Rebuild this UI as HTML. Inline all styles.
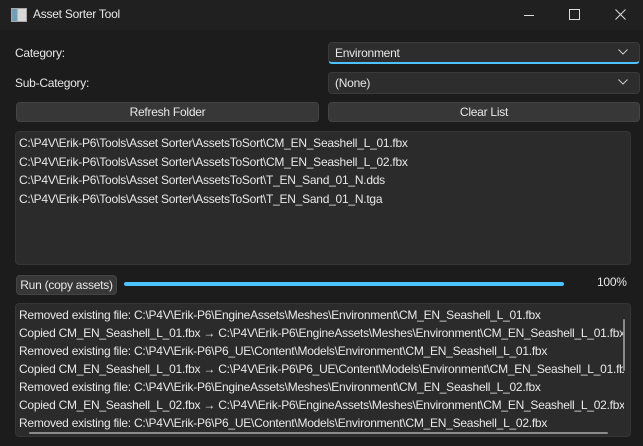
<!DOCTYPE html>
<html><head><style>
body{margin:0;width:643px;height:446px;background:#1c1c1c;font-family:"Liberation Sans",sans-serif;font-size:12px;color:#e8e8e8;position:relative;overflow:hidden;letter-spacing:-0.25px}
.a{position:absolute;white-space:nowrap}
.box{position:absolute;background:#2b2b2b;border:1px solid #353535;border-radius:4px}
.combo{position:absolute;background:#2d2d2d;border:1px solid #3a3a3a;border-radius:4px;height:20px}
.btn{position:absolute;background:#373737;border:1px solid #444;border-radius:4px;text-align:center;line-height:18px}
</style></head><body>
<div class="a" style="left:0;top:0;width:643px;height:30px;background:#202020"></div>
<div class="a" style="left:11px;top:8px;width:14px;height:12px;background:linear-gradient(90deg,#6fa0b8 0 40%,#d8d8d8 40% 100%);border:1px solid #aaa"></div>
<div class="a" style="left:33px;top:7px;">Asset Sorter Tool</div>
<div class="a" style="left:524px;top:15px;width:10px;height:1px;background:#ddd"></div>
<div class="a" style="left:569px;top:9px;width:9px;height:9px;border:1px solid #ddd"></div>
<svg class="a" style="left:615px;top:9px" width="11" height="11"><path d="M0.5 0.5L10.5 10.5M10.5 0.5L0.5 10.5" stroke="#ddd"/></svg>

<div class="a" style="left:15px;top:46px">Category:</div>
<div class="a" style="left:15px;top:76px">Sub-Category:</div>
<div class="combo" style="left:328px;top:42px;width:310px;border-bottom:2px solid #4cc2ff;height:19px"></div>
<div class="a" style="left:335px;top:46px">Environment</div>
<div class="combo" style="left:328px;top:72px;width:310px"></div>
<div class="a" style="left:335px;top:76px">(None)</div>
<svg class="a" style="left:618px;top:49px" width="10" height="6"><path d="M0.5 0.5L5 5L9.5 0.5" stroke="#ccc" fill="none"/></svg>
<svg class="a" style="left:618px;top:79px" width="10" height="6"><path d="M0.5 0.5L5 5L9.5 0.5" stroke="#ccc" fill="none"/></svg>
<div class="btn" style="left:16px;top:102px;width:301px;height:18px">Refresh Folder</div>
<div class="btn" style="left:328px;top:102px;width:310px;height:18px">Clear List</div>

<div class="box" style="left:15px;top:131px;width:614px;height:132px"></div>
<div class="a" style="left:19px;top:134px;line-height:18.5px">C:\P4V\Erik-P6\Tools\Asset Sorter\AssetsToSort\CM_EN_Seashell_L_01.fbx<br>C:\P4V\Erik-P6\Tools\Asset Sorter\AssetsToSort\CM_EN_Seashell_L_02.fbx<br>C:\P4V\Erik-P6\Tools\Asset Sorter\AssetsToSort\T_EN_Sand_01_N.dds<br>C:\P4V\Erik-P6\Tools\Asset Sorter\AssetsToSort\T_EN_Sand_01_N.tga</div>

<div class="btn" style="left:16px;top:275px;width:99px;height:18px">Run (copy assets)</div>
<div class="a" style="left:124px;top:282px;width:440px;height:4px;border-radius:2px;background:#4cc2ff"></div>
<div class="a" style="left:597px;top:275px">100%</div>

<div class="box" style="left:15px;top:303px;width:614px;height:132px;overflow:hidden">
<div class="a" style="left:3px;top:2px;line-height:18px;width:605px;overflow:hidden;height:127px">Removed existing file: C:\P4V\Erik-P6\EngineAssets\Meshes\Environment\CM_EN_Seashell_L_01.fbx<br>Copied CM_EN_Seashell_L_01.fbx → C:\P4V\Erik-P6\EngineAssets\Meshes\Environment\CM_EN_Seashell_L_01.fbx<br>Removed existing file: C:\P4V\Erik-P6\P6_UE\Content\Models\Environment\CM_EN_Seashell_L_01.fbx<br>Copied CM_EN_Seashell_L_01.fbx → C:\P4V\Erik-P6\P6_UE\Content\Models\Environment\CM_EN_Seashell_L_01.fbx<br>Removed existing file: C:\P4V\Erik-P6\EngineAssets\Meshes\Environment\CM_EN_Seashell_L_02.fbx<br>Copied CM_EN_Seashell_L_02.fbx → C:\P4V\Erik-P6\EngineAssets\Meshes\Environment\CM_EN_Seashell_L_02.fbx<br>Removed existing file: C:\P4V\Erik-P6\P6_UE\Content\Models\Environment\CM_EN_Seashell_L_02.fbx</div>
<div class="a" style="left:607px;top:15px;width:2px;height:52px;background:#8a8a8a;border-radius:1px"></div>
<div class="a" style="left:13px;top:128px;width:579px;height:2px;background:#8a8a8a;border-radius:1px"></div>
</div>
</body></html>
